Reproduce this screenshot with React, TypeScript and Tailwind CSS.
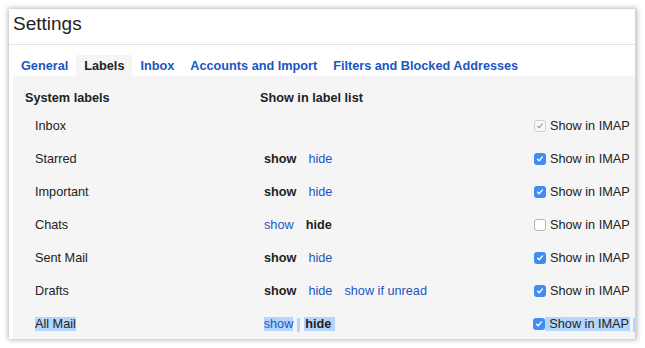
import React from "react";

const SEL = "bg-[#b4d5fc]";

function Check({ state }: { state: "on" | "off" | "disabled" }) {
  if (state === "off") {
    return (
      <span className="inline-block align-middle relative top-[-1px] w-[12px] h-[12px] rounded-[3px] border border-[#b5b5b5] bg-white" />
    );
  }
  const disabled = state === "disabled";
  return (
    <span
      className={
        "inline-flex align-middle relative top-[-1px] items-center justify-center w-[12px] h-[12px] rounded-[3px] " +
        (disabled ? "border border-[#cfcfcf] bg-[#fafafa]" : "bg-[#3d8ef0]")
      }
    >
      <svg width="8" height="8" viewBox="0 0 8 8">
        <path
          d="M1.6 4.2 L3.2 5.8 L6.4 1.9"
          fill="none"
          stroke={disabled ? "#a8a8a8" : "#ffffff"}
          strokeWidth="1.4"
          strokeLinecap="round"
          strokeLinejoin="round"
        />
      </svg>
    </span>
  );
}

type Row = {
  name: string;
  show?: "show" | "hide";
  unread?: boolean;
  check: "on" | "off" | "disabled";
  selected?: boolean;
};

const rows: Row[] = [
  { name: "Inbox", check: "disabled" },
  { name: "Starred", show: "show", check: "on" },
  { name: "Important", show: "show", check: "on" },
  { name: "Chats", show: "hide", check: "off" },
  { name: "Sent Mail", show: "show", check: "on" },
  { name: "Drafts", show: "show", unread: true, check: "on" },
  { name: "All Mail", show: "hide", check: "on", selected: true },
];

export default function App() {
  const tabs = ["General", "Labels", "Inbox", "Accounts and Import", "Filters and Blocked Addresses"];
  return (
    <div
      className="w-[645px] h-[348px] bg-white overflow-hidden pt-[9px] pl-[9px]"
      style={{ fontFamily: '"Liberation Sans", Arial, sans-serif' }}
    >
      <div className="w-[627px] h-[330px] bg-white overflow-hidden shadow-[0_0_5px_1px_rgba(0,0,0,0.28)] border-r border-[#d4d4d4] flex flex-col">
        <div className="h-[36px] shrink-0 border-b border-[#e3e3e3] pl-[4px] pt-[4px] text-[19px] leading-[22px] text-[#222]">
          Settings
        </div>
        <div className="flex shrink-0 pl-[4px] pt-[10px] text-[12.7px] font-bold leading-[23px] whitespace-nowrap">
          {tabs.map((t) => (
            <div
              key={t}
              className={
                "px-[8px] h-[21px] " + (t === "Labels" ? "bg-[#f5f5f5] text-[#222]" : "text-[#1a56c4]")
              }
            >
              {t}
            </div>
          ))}
        </div>
        <div className="flex-1 ml-[4px] bg-[#f5f5f5] pl-[12px] pt-[11px] text-[12.7px] text-[#222] whitespace-nowrap">
          <div className="flex h-[23px] leading-[23px] font-bold">
            <div className="w-[235px]">System labels</div>
            <div>Show in label list</div>
          </div>
          {rows.map((r) => (
            <div key={r.name} className="flex h-[33px] leading-[33px]">
              <div className="w-[239px] pl-[10px]">
                <span className={r.selected ? SEL : ""}>{r.name}</span>
              </div>
              <div className="w-[270px]">
                {r.show &&
                  (r.selected ? (
                    <>
                      <span className={SEL + " text-[#1a56c4]"}>show</span>
                      <span className={"inline-block align-middle ml-[4px] w-[3px] h-[14px] " + SEL} />
                      <span className={"ml-[4px] pl-[1px] pr-[4px] font-bold " + SEL}>hide</span>
                    </>
                  ) : (
                    <>
                      <span className={r.show === "show" ? "font-bold" : "text-[#1a56c4]"}>show</span>
                      <span className={"ml-[12px] " + (r.show === "hide" ? "font-bold" : "text-[#1a56c4]")}>
                        hide
                      </span>
                      {r.unread && <span className="ml-[12px] text-[#1a56c4]">show if unread</span>}
                    </>
                  ))}
              </div>
              <div>
                <Check state={r.check} />
                {r.selected ? (
                  <>
                    <span className={"pl-[4px] pr-[1px] " + SEL}>Show in IMAP</span>
                    <span className={"inline-block align-middle ml-[3px] w-[2px] h-[14px] " + SEL} />
                  </>
                ) : (
                  <span className="pl-[4px]">Show in IMAP</span>
                )}
              </div>
            </div>
          ))}
        </div>
      </div>
    </div>
  );
}
